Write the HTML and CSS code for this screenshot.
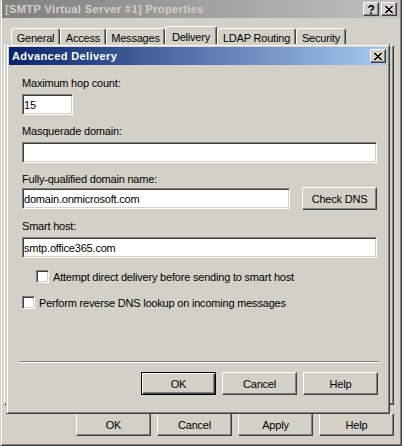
FILE: index.html
```html
<!DOCTYPE html>
<html lang="en">
<head>
    <meta charset="UTF-8">
    <title>[SMTP Virtual Server #1] Properties</title>
    <link rel="stylesheet" href="styles.css">
</head>
<body>
    <div class="window">
        <div class="titlebar inactive">
            <span class="title">[SMTP Virtual Server #1] Properties</span>
            <div class="caption-buttons">
                <button class="caption-btn help-glyph">?</button>
                <button class="caption-btn">
                    <svg width="8" height="7" viewBox="0 0 8 7" shape-rendering="crispEdges"><path d="M0 0h2v1H0zM6 0h2v1H6zM1 1h2v1H1zM5 1h2v1H5zM2 2h4v1H2zM3 3h2v1H3zM2 4h4v1H2zM1 5h2v1H1zM5 5h2v1H5zM0 6h2v1H0zM6 6h2v1H6z" fill="#000"/></svg>
                </button>
            </div>
        </div>

        <div class="tabs">
            <div class="tab tab-general">General</div>
            <div class="tab tab-access">Access</div>
            <div class="tab tab-messages">Messages</div>
            <div class="tab tab-delivery selected">Delivery</div>
            <div class="tab tab-ldap">LDAP Routing</div>
            <div class="tab tab-security">Security</div>
        </div>

        <div class="tab-panel"></div>

        <div class="actions">
            <button class="btn">OK</button>
            <button class="btn">Cancel</button>
            <button class="btn">Apply</button>
            <button class="btn">Help</button>
        </div>

        <div class="dialog">
            <div class="titlebar active">
                <span class="title">Advanced Delivery</span>
                <div class="caption-buttons">
                    <button class="caption-btn">
                        <svg width="8" height="7" viewBox="0 0 8 7" shape-rendering="crispEdges"><path d="M0 0h2v1H0zM6 0h2v1H6zM1 1h2v1H1zM5 1h2v1H5zM2 2h4v1H2zM3 3h2v1H3zM2 4h4v1H2zM1 5h2v1H1zM5 5h2v1H5zM0 6h2v1H0zM6 6h2v1H6z" fill="#000"/></svg>
                    </button>
                </div>
            </div>

            <div class="fields">
                <div class="field">
                    <label class="label">Maximum hop count:</label>
                    <input class="edit edit-short" type="text" value="15">
                </div>

                <div class="field">
                    <label class="label">Masquerade domain:</label>
                    <input class="edit" type="text" value="">
                </div>

                <div class="field">
                    <label class="label">Fully-qualified domain name:</label>
                    <div class="field-row">
                        <input class="edit edit-fqdn" type="text" value="domain.onmicrosoft.com">
                        <button class="btn">Check DNS</button>
                    </div>
                </div>

                <div class="field">
                    <label class="label">Smart host:</label>
                    <input class="edit" type="text" value="smtp.office365.com">
                </div>

                <label class="check check-indent">
                    <input type="checkbox">
                    <span>Attempt direct delivery before sending to smart host</span>
                </label>

                <label class="check">
                    <input type="checkbox">
                    <span>Perform reverse DNS lookup on incoming messages</span>
                </label>
            </div>

            <div class="dialog-footer">
                <div class="separator"></div>
                <div class="dialog-actions">
                    <button class="btn default">OK</button>
                    <button class="btn">Cancel</button>
                    <button class="btn">Help</button>
                </div>
            </div>
        </div>
    </div>
</body>
</html>
```

FILE: styles.css
```css
:root {
    --face: #d4d0c8;
    --light: #ffffff;
    --shadow: #808080;
    --dark: #404040;
}

* {
    margin: 0;
    padding: 0;
    box-sizing: border-box;
}

body {
    font-family: "Liberation Sans", Arial, sans-serif;
    font-size: 11px;
    letter-spacing: -0.2px;
    color: #000;
    background: var(--face);
}

button,
input {
    font: inherit;
    letter-spacing: inherit;
    color: inherit;
}

/* outer property sheet */
.window {
    position: relative;
    width: 402px;
    height: 446px;
    display: flex;
    flex-direction: column;
    background: var(--face);
    border-style: solid;
    border-width: 0 1px 1px 1px;
    border-color: var(--face) var(--dark) var(--dark) var(--face);
    box-shadow: inset 1px 0 var(--light), inset -1px -1px var(--shadow);
    padding: 0 1px 1px 1px;
}

.titlebar {
    height: 18px;
    display: flex;
    align-items: center;
    padding-left: 3px;
}

.titlebar.inactive {
    background: linear-gradient(to right, #808080, #c0c0c0);
}

.titlebar.active {
    background: linear-gradient(to right, #0a246a, #a6caf0);
}

.title {
    flex: 1;
    font-weight: bold;
    letter-spacing: 0.4px;
    white-space: nowrap;
}

.inactive .title {
    color: var(--face);
}

.active .title {
    color: #fff;
}

.caption-buttons {
    display: flex;
    gap: 2px;
    margin-right: 3px;
}

.active .caption-buttons {
    margin-right: 1px;
}

.caption-btn {
    width: 16px;
    height: 14px;
    display: flex;
    align-items: center;
    justify-content: center;
    background: var(--face);
    border: 1px solid;
    border-color: var(--light) var(--dark) var(--dark) var(--light);
    box-shadow: inset -1px -1px var(--shadow);
}

.help-glyph {
    font-weight: bold;
    font-size: 12px;
    line-height: 12px;
    padding-top: 1px;
}

/* tabs */
.tabs {
    height: 27px;
    display: flex;
    align-items: flex-end;
    padding-left: 9px;
}

.tab {
    height: 17px;
    padding-top: 3px;
    text-align: center;
    white-space: nowrap;
    border: 1px solid;
    border-bottom: none;
    border-color: var(--light) var(--dark) transparent var(--light);
    border-radius: 3px 3px 0 0;
    box-shadow: inset -1px 0 var(--shadow);
}

.tab.selected {
    height: 19px;
    padding-top: 4px;
}

.tab-general { width: 49px; }
.tab-access { width: 46px; }
.tab-messages { width: 59px; }
.tab-delivery { width: 52px; }
.tab-ldap { width: 79px; }
.tab-security { width: 50px; }

.tab-panel {
    margin-left: 2px;
    width: 390px;
    height: 360px;
    border: 1px solid;
    border-color: var(--light) var(--dark) var(--dark) var(--light);
    box-shadow: inset -1px -1px var(--shadow);
}

/* push buttons */
.actions {
    display: flex;
    justify-content: flex-end;
    gap: 6px;
    margin-top: 8px;
    padding-right: 6px;
}

.btn {
    width: 75px;
    height: 23px;
    display: flex;
    align-items: center;
    justify-content: center;
    background: var(--face);
    border: 1px solid;
    border-color: var(--light) var(--dark) var(--dark) var(--light);
    box-shadow: inset -1px -1px var(--shadow);
}

.btn.default {
    border-color: #000;
    box-shadow: inset 1px 1px var(--light), inset -1px -1px var(--dark), inset -2px -2px var(--shadow);
}

/* Advanced Delivery dialog, floating over the sheet */
.dialog {
    position: absolute;
    left: 5px;
    top: 44px;
    width: 384px;
    height: 370px;
    display: flex;
    flex-direction: column;
    background: var(--face);
    border: 1px solid;
    border-color: var(--face) var(--dark) var(--dark) var(--face);
    box-shadow: inset 1px 1px var(--light), inset -1px -1px var(--shadow);
    padding: 2px;
}

.fields {
    flex: 1;
    padding: 0 10px 0 13px;
}

.field {
    margin-top: 10px;
}

.field:first-child {
    margin-top: 12px;
}

.label {
    display: block;
    line-height: 13px;
}

.edit {
    display: block;
    width: 100%;
    height: 21px;
    margin-top: 4px;
    padding: 0 2px 0 1px;
    background: #fff;
    border: 1px solid;
    border-color: var(--shadow) var(--light) var(--light) var(--shadow);
    box-shadow: inset 1px 1px var(--dark), inset -1px -1px var(--face);
    outline: none;
}

.edit-short {
    width: 51px;
}

.field-row {
    display: flex;
    align-items: center;
    justify-content: space-between;
    margin-top: 1px;
}

.field-row .edit {
    margin-top: 0;
}

.edit-fqdn {
    width: 268px;
}

.check {
    display: flex;
    align-items: center;
    gap: 4px;
    height: 13px;
    margin-top: 13px;
}

.check-indent {
    padding-left: 14px;
    margin-top: 12px;
}

.check input {
    appearance: none;
    width: 13px;
    height: 13px;
    flex: none;
    background: #fff;
    border: 1px solid;
    border-color: var(--shadow) var(--light) var(--light) var(--shadow);
    box-shadow: inset 1px 1px var(--dark), inset -1px -1px var(--face);
}

.dialog-footer {
    padding-bottom: 16px;
}

.separator {
    margin: 0 8px 0 10px;
    border-top: 1px solid var(--shadow);
    border-bottom: 1px solid var(--light);
}

.dialog-actions {
    display: flex;
    justify-content: flex-end;
    gap: 6px;
    margin-top: 9px;
    padding-right: 9px;
}
```
